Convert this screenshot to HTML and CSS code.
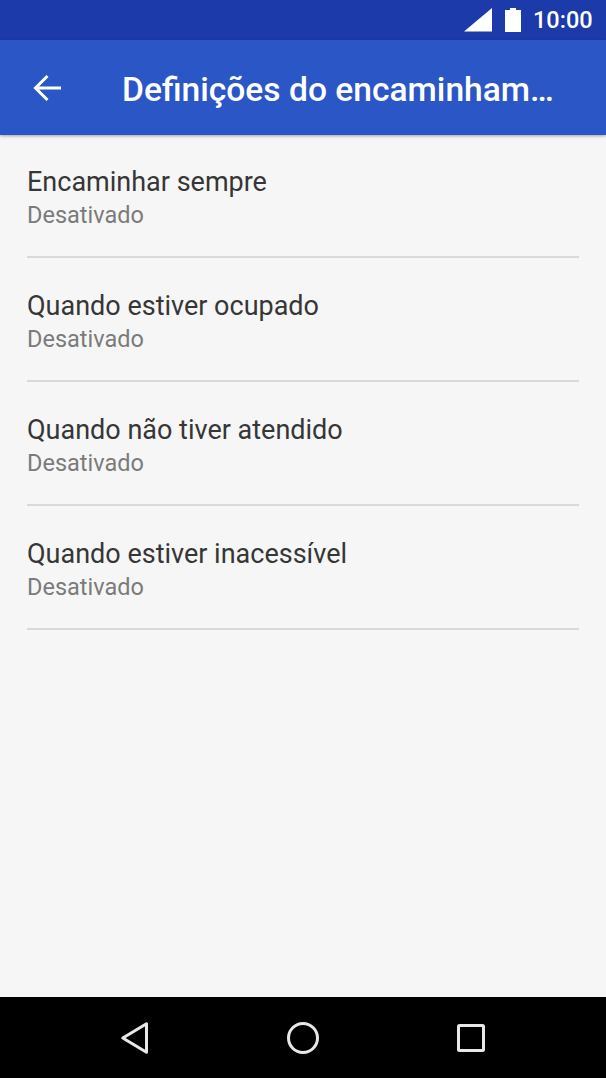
FILE: index.html
```html
<!DOCTYPE html>
<html lang="pt">
<head>
    <meta charset="UTF-8">
    <meta name="viewport" content="width=device-width, initial-scale=1.0">
    <title>Definições do encaminhamento</title>
    <link rel="stylesheet" href="styles.css">
</head>
<body>
    <div class="screen">
        <div class="status-bar">
            <svg class="signal-icon" width="28" height="24" viewBox="0 0 28 24"><path d="M0 23.5 L28 0 V23.5 Z" fill="#fff"/></svg>
            <svg class="battery-icon" width="16" height="24" viewBox="0 0 16 24"><path d="M5 0 H11 V2 H16 V24 H0 V2 H5 Z" fill="#fff"/></svg>
            <span class="clock">10:00</span>
        </div>
        <header class="app-bar">
            <svg class="back-icon" width="30" height="28" viewBox="0 0 30 28"><path d="M28 14 H3 M14.5 2 L2.5 14 L14.5 26" fill="none" stroke="#fff" stroke-width="3"/></svg>
            <h1 class="app-title">Definições do encaminham…</h1>
        </header>
        <main class="list">
            <div class="list-item">
                <div class="item-title">Encaminhar sempre</div>
                <div class="item-sub">Desativado</div>
            </div>
            <div class="list-item">
                <div class="item-title">Quando estiver ocupado</div>
                <div class="item-sub">Desativado</div>
            </div>
            <div class="list-item">
                <div class="item-title">Quando não tiver atendido</div>
                <div class="item-sub">Desativado</div>
            </div>
            <div class="list-item">
                <div class="item-title">Quando estiver inacessível</div>
                <div class="item-sub">Desativado</div>
            </div>
        </main>
        <nav class="nav-bar">
            <svg width="27" height="32" viewBox="0 0 27 32"><path d="M1.8 16 L25.5 1.8 V30.2 Z" fill="none" stroke="#e8e8e8" stroke-width="3" stroke-linejoin="round"/></svg>
            <svg width="32" height="32" viewBox="0 0 32 32"><circle cx="16" cy="16" r="14.5" fill="none" stroke="#e8e8e8" stroke-width="3"/></svg>
            <svg width="28" height="28" viewBox="0 0 28 28"><rect x="1.5" y="1.5" width="25" height="25" rx="1" fill="none" stroke="#e8e8e8" stroke-width="3"/></svg>
        </nav>
    </div>
</body>
</html>
```

FILE: styles.css
```css
* {
    box-sizing: border-box;
}

body {
    margin: 0;
    font-family: Roboto, sans-serif;
    background-color: #f6f6f6;
}

.screen {
    display: flex;
    flex-direction: column;
    width: 606px;
    height: 1078px;
    overflow: hidden;
}

.status-bar {
    display: flex;
    align-items: center;
    justify-content: flex-end;
    flex: 0 0 40px;
    padding-right: 14px;
    background-color: #1c3aa9;
    color: #fff;
}

.signal-icon {
    margin-right: 13px;
}

.battery-icon {
    margin-right: 12px;
}

.clock {
    width: 59px;
    font-size: 23.5px;
    font-weight: 500;
    text-align: right;
}

.app-bar {
    display: flex;
    align-items: center;
    flex: 0 0 95px;
    padding: 0 33px;
    background-color: #2b56c6;
    box-shadow: 0 1px 3px rgba(0, 0, 0, 0.35);
    position: relative;
}

.back-icon {
    flex: none;
    margin-right: 59px;
}

.app-title {
    margin: 4px 0 0;
    font-size: 33.6px;
    font-weight: 500;
    color: #fff;
    white-space: nowrap;
}

.list {
    flex: 1;
    margin-top: -1px;
    padding: 0 27px;
}

.list-item {
    height: 124px;
    padding-top: 30px;
    border-bottom: 2px solid #d9d9d9;
}

.item-title {
    height: 36px;
    line-height: 36px;
    font-size: 27px;
    color: #363636;
}

.item-sub {
    height: 31px;
    line-height: 30px;
    font-size: 23.5px;
    color: #7b7b7b;
}

.nav-bar {
    display: flex;
    align-items: center;
    justify-content: space-between;
    flex: 0 0 81px;
    padding: 0 121px;
    background-color: #000;
}
```
